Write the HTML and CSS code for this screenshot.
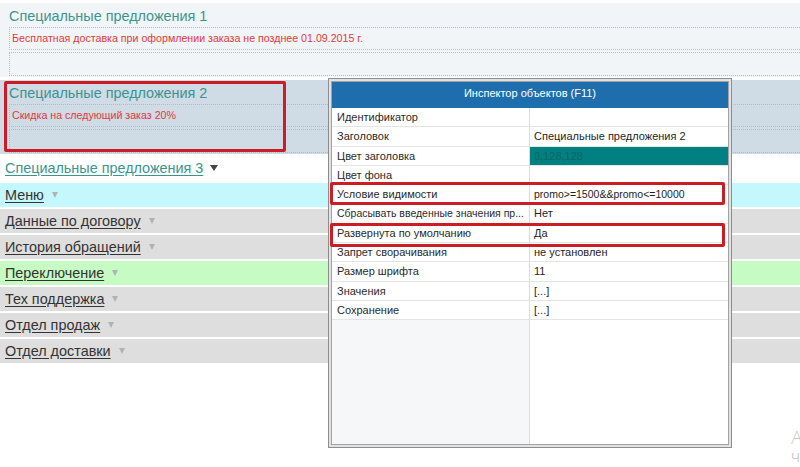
FILE: index.html
```html
<!DOCTYPE html>
<html lang="ru">
<head>
<meta charset="utf-8">
<title>Инспектор объектов</title>
<link rel="stylesheet" href="styles.css">
</head>
<body>
<div class="page">
  <section class="promo promo-light">
    <div class="promo-title">Специальные предложения 1</div>
    <div class="promo-grid">
      <div class="promo-line">Бесплатная доставка при оформлении заказа не позднее 01.09.2015 г.</div>
      <div class="promo-line promo-empty"></div>
    </div>
  </section>
  <section class="promo promo-blue">
    <div class="promo-title">Специальные предложения 2</div>
    <div class="promo-grid">
      <div class="promo-line">Скидка на следующий заказ 20%</div>
      <div class="promo-line promo-empty"></div>
    </div>
  </section>
  <div class="group-head"><span class="group-link">Специальные предложения 3</span><span class="caret caret-dark"></span></div>
  <div class="nav-row row-cyan"><span class="nav-link">Меню</span><span class="caret"></span></div>
  <div class="nav-row row-gray"><span class="nav-link">Данные по договору</span><span class="caret"></span></div>
  <div class="nav-row row-gray"><span class="nav-link">История обращений</span><span class="caret"></span></div>
  <div class="nav-row row-green"><span class="nav-link">Переключение</span><span class="caret"></span></div>
  <div class="nav-row row-gray"><span class="nav-link">Тех поддержка</span><span class="caret"></span></div>
  <div class="nav-row row-gray"><span class="nav-link">Отдел продаж</span><span class="caret"></span></div>
  <div class="nav-row row-gray"><span class="nav-link">Отдел доставки</span><span class="caret"></span></div>
</div>

<div class="mark mark-promo"></div>

<div class="inspector">
  <div class="insp-body">
    <div class="insp-head">Инспектор объектов (F11)</div>
    <div class="insp-grid">
      <div class="insp-label">Идентификатор</div><div class="insp-value"></div>
      <div class="insp-label">Заголовок</div><div class="insp-value">Специальные предложения 2</div>
      <div class="insp-label">Цвет заголовка</div><div class="insp-value insp-teal">0,128,128</div>
      <div class="insp-label">Цвет фона</div><div class="insp-value"></div>
      <div class="insp-label">Условие видимости</div><div class="insp-value insp-narrow">promo&gt;=1500&amp;&amp;promo&lt;=10000</div>
      <div class="insp-label insp-narrow">Сбрасывать введенные значения пр...</div><div class="insp-value">Нет</div>
      <div class="insp-label">Развернута по умолчанию</div><div class="insp-value">Да</div>
      <div class="insp-label">Запрет сворачивания</div><div class="insp-value">не установлен</div>
      <div class="insp-label">Размер шрифта</div><div class="insp-value">11</div>
      <div class="insp-label">Значения</div><div class="insp-value">[...]</div>
      <div class="insp-label">Сохранение</div><div class="insp-value">[...]</div>
    </div>
    <div class="insp-filler">
      <div class="filler-label"></div><div class="filler-value"></div>
    </div>
  </div>
</div>

<div class="mark mark-cond"></div>
<div class="mark mark-expand"></div>

<div class="watermark">
  <div class="wm-big">Активация Windows</div>
  <div class="wm-small">Чтобы активировать Windows, перейдите в раздел «Параметры».</div>
</div>
</body>
</html>
```
FILE: styles.css
```css
html, body {
  margin: 0;
  padding: 0;
}
body {
  width: 800px;
  height: 467px;
  overflow: hidden;
  position: relative;
  background: #ffffff;
  font-family: "Liberation Sans", Arial, sans-serif;
}
.page {
  padding-top: 3px;
}

/* promo sections */
.promo {
  padding-bottom: 1px;
}
.promo-light {
  background: #f1f5f8;
  margin-bottom: 3px;
}
.promo-blue { background: #cfdbe5; }
.promo-title {
  height: 24px;
  line-height: 26px;
  padding-left: 9px;
  font-size: 14.4px;
  color: #3a958f;
}
.promo-grid {
  margin-left: 9px;
  display: flex;
  flex-direction: column;
  gap: 2px;
}
.promo-line {
  height: 21px;
  line-height: 20px;
  border-top: 1px dotted #b3bcc4;
  border-bottom: 1px dotted #b3bcc4;
  border-left: 1px dotted #b3bcc4;
  padding-left: 2px;
  font-size: 10.65px;
  color: #e2383c;
  white-space: nowrap;
}
.promo-empty {
  height: 22px;
}

/* collapsible groups */
.group-head {
  height: 29px;
  display: flex;
  align-items: center;
  padding-left: 5px;
  padding-bottom: 1px;
  box-sizing: border-box;
}
.group-link {
  font-size: 14.4px;
  color: #3a958f;
  text-decoration: underline;
  text-underline-offset: 2px;
}
.nav-row {
  height: 24px;
  margin-bottom: 2px;
  display: flex;
  align-items: center;
  padding-left: 5px;
}
.row-cyan { background: #c5f8fc; }
.row-gray { background: #dedede; }
.row-green { background: #c6fbc3; }
.nav-link {
  font-size: 14.4px;
  color: #333333;
  text-decoration: underline;
  text-underline-offset: 2px;
}
.caret {
  display: inline-block;
  width: 0;
  height: 0;
  margin-left: 8px;
  border-left: 3.5px solid transparent;
  border-right: 3.5px solid transparent;
  border-top: 6px solid #b2b2b2;
}
.caret-dark {
  margin-left: 7px;
  border-left-width: 4px;
  border-right-width: 4px;
  border-top: 6px solid #454545;
}

/* highlight annotations */
.mark {
  position: absolute;
  box-sizing: border-box;
  border: 3px solid #cc1d26;
  border-radius: 2px;
}
.mark-promo {
  left: 4px;
  top: 81px;
  width: 282px;
  height: 71px;
}
.mark-cond {
  left: 330px;
  top: 182px;
  width: 395px;
  height: 23px;
}
.mark-expand {
  left: 330px;
  top: 223px;
  width: 395px;
  height: 24px;
}

/* object inspector window */
.inspector {
  position: absolute;
  left: 328px;
  top: 78px;
  width: 404px;
  height: 370px;
  box-sizing: border-box;
  border: 1px solid #8e8e8e;
  padding: 2px;
  background: #e2e2e2;
}
.insp-body {
  box-sizing: border-box;
  height: 100%;
  border: 1px solid #a2a2a2;
  background: #ffffff;
  display: flex;
  flex-direction: column;
  font-size: 11px;
  color: #1e1e1e;
}
.insp-head {
  height: 26px;
  line-height: 23px;
  background: #1e6eae;
  color: #ffffff;
  text-align: center;
  font-size: 11px;
}
.insp-grid {
  display: grid;
  grid-template-columns: 198px 1fr;
  grid-auto-rows: 19.3px;
}
.insp-label,
.insp-value {
  box-sizing: border-box;
  border-bottom: 1px solid #e4e4e4;
  line-height: 18px;
  white-space: nowrap;
  overflow: hidden;
}
.insp-label {
  padding-left: 5px;
  border-right: 1px solid #dcdcdc;
  color: #2a2a2a;
}
.insp-value {
  padding-left: 4px;
}
.insp-narrow {
  font-size: 10.5px;
}
.insp-teal {
  background: #008080;
  color: #0c6767;
}
.insp-filler {
  flex: 1;
  display: grid;
  grid-template-columns: 198px 1fr;
}
.filler-label {
  background: #f6f7f8;
  border-right: 1px solid #dcdcdc;
}
.filler-value {
  background: #ffffff;
}

/* OS watermark cut by the screen edge */
.watermark {
  position: absolute;
  left: 791px;
  top: 425px;
  white-space: nowrap;
  color: #c9c9c9;
  font-family: "Open Sans", "Noto Sans", sans-serif;
}
.wm-big {
  font-size: 19px;
  font-weight: 300;
  line-height: 24px;
}
.wm-small {
  font-size: 13px;
  line-height: 16px;
}
```
